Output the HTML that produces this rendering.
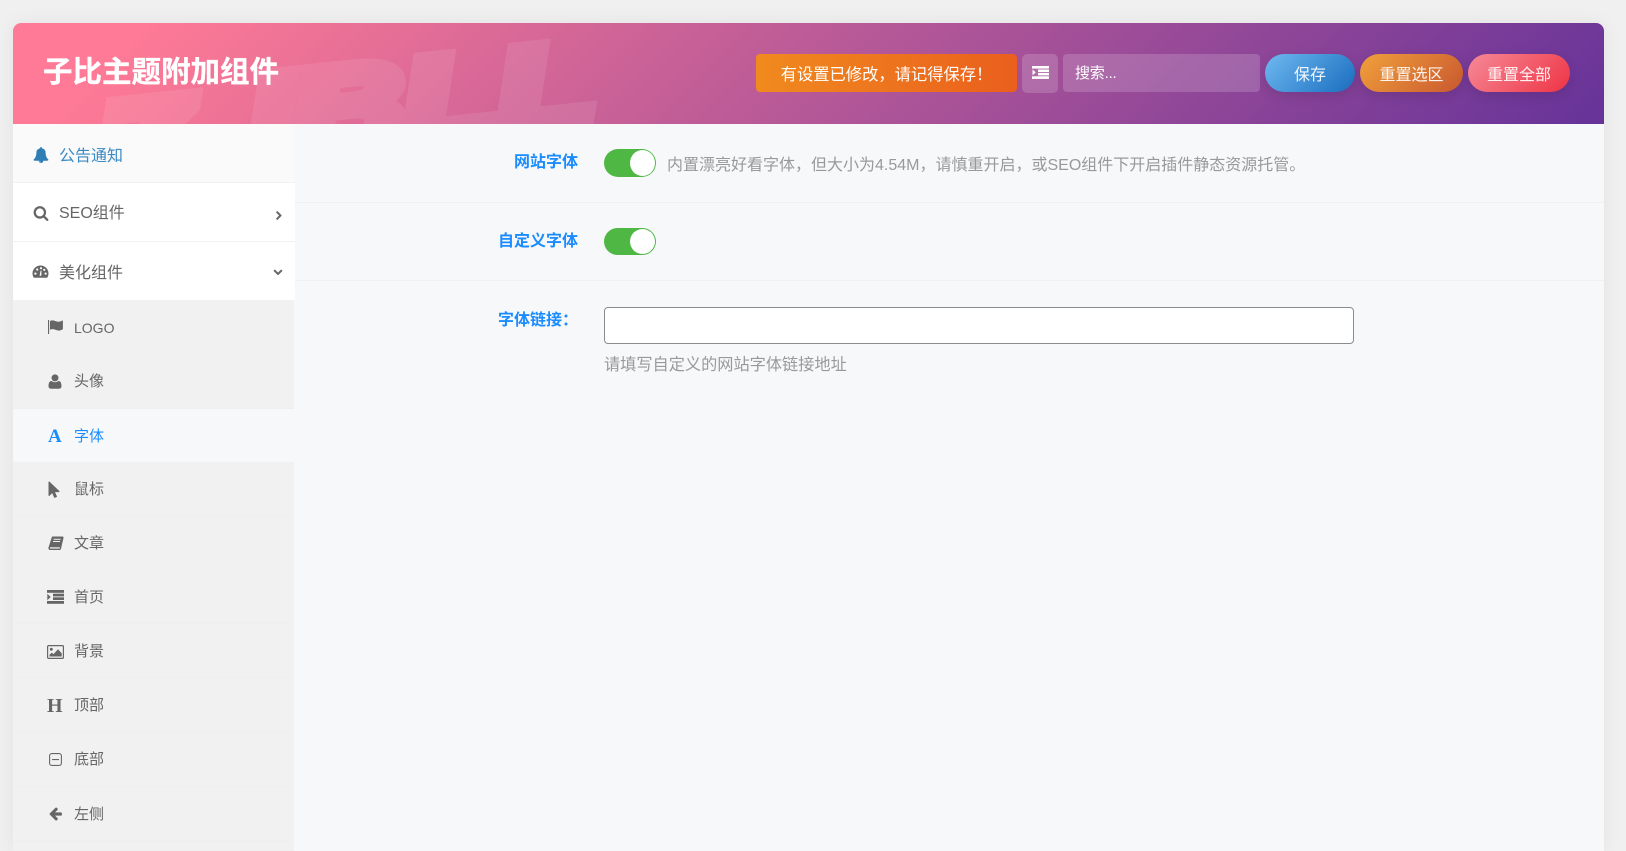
<!DOCTYPE html>
<html lang="zh-CN">
<head>
<meta charset="utf-8">
<title>子比主题附加组件</title>
<style>
html,body{margin:0;padding:0;width:1626px;height:851px;overflow:hidden;background:#f0f0f0;font-family:"Liberation Sans","Noto Sans CJK SC",sans-serif;}
*{box-sizing:border-box;}
.a{position:absolute;white-space:nowrap;}
#card{position:absolute;left:13px;top:23px;width:1591px;height:828px;border-radius:8px 8px 0 0;box-shadow:0 0 20px rgba(0,0,0,.06);background:#f7f8fa;}
#head{position:absolute;left:13px;top:23px;width:1591px;height:101px;border-radius:8px 8px 0 0;overflow:hidden;background:linear-gradient(135deg,#fe7a96 8%,#663399 100%);}
#wm{position:absolute;left:87px;top:36px;font:italic bold 115px/150px "Liberation Sans",sans-serif;color:#fff;opacity:.09;-webkit-text-stroke:15px #fff;transform:rotate(-6deg) scaleX(1.35);transform-origin:0 115px;white-space:nowrap;}
#wm b{letter-spacing:44px;font-weight:bold;position:relative;top:12px;}
#title{left:30px;top:5px;font-size:29.5px;line-height:90px;font-weight:700;color:#fff;-webkit-text-stroke:.3px #fff;}
.btn{position:absolute;top:54px;height:38px;line-height:44px;text-align:center;color:rgba(255,255,255,.92);font-size:16px;border-radius:19px;box-shadow:0 4px 12px rgba(0,0,0,.12);}
.side{position:absolute;left:13px;width:282px;background:#fff;}
.m{border-bottom:1px solid #f2f2f2;height:59px;color:#666;font-size:16px;}
.m span{position:absolute;left:46px;top:18px;line-height:26px;}
.s{background:#f1f1f1;border-bottom:1px solid #efefef;height:54px;width:281px;color:#666;font-size:15px;}
.s span{position:absolute;left:61px;top:15px;line-height:26px;}
svg{position:absolute;fill:currentColor;}
.lab{position:absolute;right:1048px;font-size:16px;font-weight:700;color:#1a8cff;line-height:26px;white-space:nowrap;}
.tog{position:absolute;left:604px;width:52px;height:28px;border-radius:14px;background:#4fb845;}
.tog i{position:absolute;right:1px;top:1px;width:25px;height:26px;border-radius:50%;background:#fff;}
.hr{position:absolute;left:295px;width:1309px;height:1px;background:#eef0f2;}
.help{position:absolute;font-size:16px;color:#999;line-height:26px;white-space:nowrap;}
</style>
</head>
<body>
<div id="card"></div>

<!-- sidebar -->
<div class="a" style="left:294px;top:124px;width:1px;height:727px;background:#f8f8f8;"></div>
<div class="side m" style="top:124px;background:#fafafa;color:#3a8ac4;"><span style="top:20px;">公告通知</span>
<svg style="left:20px;top:23px;color:#2f7db5" width="16" height="16" viewBox="0 0 1792 1792"><path d="M912 1696q0-16-16-16-59 0-101.5-42.5t-42.5-101.5q0-16-16-16t-16 16q0 73 51.5 124.5t124.5 51.5q16 0 16-16zm816-288q0 52-38 90t-90 38h-448q0 106-75 181t-181 75-181-75-75-181h-448q-52 0-90-38t-38-90q50-42 91-88t85-119.5 74.5-158.5 50-206 19.5-260q0-152 117-282.5t307-158.5q-8-19-8-39 0-40 28-68t68-28 68 28 28 68q0 20-8 39 190 28 307 158.5t117 282.5q0 139 19.5 260t50 206 74.5 158.5 85 119.5 91 88z"/></svg></div>
<div class="side m" style="top:183px;"><span>SEO组件</span>
<svg style="left:20px;top:22px" width="16" height="16" viewBox="0 0 1792 1792"><path d="M1216 832q0-185-131.5-316.5t-316.5-131.5-316.5 131.5-131.5 316.5 131.5 316.5 316.5 131.5 316.5-131.5 131.5-316.5zm512 832q0 52-38 90t-90 38q-54 0-90-38l-343-342q-179 124-399 124-143 0-273.5-55.5t-225-150-150-225-55.5-273.5 55.5-273.5 150-225 225-150 273.5-55.5 273.5 55.5 225 150 150 225 55.5 273.5q0 220-124 399l343 343q37 37 37 90z"/></svg>
<svg style="left:259px;top:25px" width="14" height="14" viewBox="0 0 1792 1792"><path d="M1171 960q0 13-10 23l-466 466q-10 10-23 10t-23-10l-50-50q-10-10-10-23t10-23l393-393-393-393q-10-10-10-23t10-23l50-50q10-10 23-10t23 10l466 466q10 10 10 23z" stroke="currentColor" stroke-width="120"/></svg></div>
<div class="side" style="top:242px;height:58px;color:#666;font-size:16px;"><span style="position:absolute;left:46px;top:19px;line-height:26px;">美化组件</span>
<svg style="left:19px;top:21px" width="17" height="17" viewBox="0 0 17 17"><path d="M8.500 2.500C4.100 2.500.5 6 .5 10.400c0 1.500.4 2.800 1.100 4 .2.300.5.400.8.400h12.200c.3 0 .6-.1.800-.4.700-1.200 1.100-2.500 1.100-4 0-4.400-3.600-7.900-8-7.900z"/><g fill="#fff"><circle cx="3.400" cy="10.600" r="1.100"/><circle cx="5.200" cy="6.500" r="1.100"/><circle cx="9" cy="5.200" r="1.100"/><circle cx="13.600" cy="10.600" r="1.100"/><circle cx="12.200" cy="6.800" r="1.100"/><path d="M7.600 12.800l1-5.200h.9l-.2 5.200z"/></g></svg>
<svg style="left:258px;top:23px" width="14" height="14" viewBox="0 0 1792 1792"><path d="M1395 736q0 13-10 23l-466 466q-10 10-23 10t-23-10l-466-466q-10-10-10-23t10-23l50-50q10-10 23-10t23 10l393 393 393-393q10-10 23-10t23 10l50 50q10 10 10 23z" stroke="currentColor" stroke-width="120"/></svg></div>

<div class="side s" style="top:300px;"><span style="font-size:14px;">LOGO</span>
<svg style="left:35px;top:19px" width="16" height="16" viewBox="0 0 16 16"><rect x="0" y="1" width="1.100" height="14" /><path d="M2 2.200C4 .8 6 1.500 8 2.300c2 .7 4 .6 6-.7.500-.2.900 0 .9.500v7.600c0 .4-.2.600-.5.800-2.200 1.400-4.400 1.300-6.600.4-2-.8-3.900-1.300-5.800 0z"/></svg></div>
<div class="side s" style="top:354px;height:55px;"><span>头像</span>
<svg style="left:35px;top:20px" width="14" height="15" viewBox="0 0 14 15"><circle cx="7" cy="3.900" r="3.500"/><path d="M3.600 7c1 .8 2.100 1.200 3.400 1.200s2.400-.4 3.400-1.200c2.200 0 3.100 2 3.100 5.300 0 1.500-1 2.400-2.200 2.400H2.700c-1.200 0-2.200-.9-2.200-2.400C.5 9 1.400 7 3.600 7z"/></svg></div>
<div class="side" style="top:409px;height:53px;background:#f7f8fa;width:282px;color:#1a8cff;font-size:15px;"><span style="position:absolute;left:61px;top:15px;line-height:26px;">字体</span><span style="position:absolute;left:35px;top:15px;line-height:26px;font:700 19px/26px 'Liberation Serif',serif;">A</span></div>
<div class="side s" style="top:462px;"><span>鼠标</span>
<svg style="left:35px;top:19px" width="12" height="17" viewBox="0 0 12 17"><path d="M.5 1.200c0-.6.700-.9 1.100-.5l9.700 9.300c.5.400.2 1.100-.4 1.100H7l1.900 4.100c.2.300 0 .7-.3.800l-1.700.8c-.3.100-.7 0-.8-.4l-1.900-4.300-2.600 2.700c-.4.400-1.100.1-1.100-.4z"/></svg></div>
<div class="side s" style="top:516px;"><span>文章</span>
<svg style="left:35px;top:20px" width="16" height="15" viewBox="0 0 16 15"><path d="M4 .5h10.600c.8 0 1.100.7.900 1.400L13 12.700c-.2.800-.7 1.300-1.500 1.300H2.300C1 14 .2 13 .5 11.500z"/><g fill="#f1f1f1"><rect x="5.600" y="2.800" width="7" height="1"/><rect x="5" y="5" width="7" height="1"/><rect x="2" y="11.300" width="9.800" height="1.300"/></g></svg></div>
<div class="side s" style="top:570px;"><span>首页</span>
<svg style="left:34px;top:20px" width="17" height="14" viewBox="0 0 17 14"><rect x="0" y="0" width="17" height="2.800"/><rect x="6" y="3.700" width="11" height="2.700"/><rect x="6" y="7.300" width="11" height="2.700"/><rect x="0" y="11" width="17" height="2.800"/><path d="M.3 3.800l3.400 3.200-3.400 3.200z"/></svg></div>
<div class="side s" style="top:624px;"><span>背景</span>
<svg style="left:34px;top:21px" width="17" height="14" viewBox="0 0 17 14"><rect x=".6" y=".6" width="15.800" height="12.800" rx="1" fill="none" stroke="currentColor" stroke-width="1.200"/><circle cx="4.300" cy="4.300" r="1.500"/><path d="M2.500 11.500V9.800l2.300-2.200 1.700 1.500 4.500-4.800 3.700 4v3.200z"/></svg></div>
<div class="side s" style="top:678px;"><span>顶部</span><span style="left:34px;top:15px;font:700 20px/26px 'Liberation Serif',serif;">H</span></div>
<div class="side s" style="top:732px;height:55px;"><span>底部</span>
<svg style="left:36px;top:21px" width="13" height="13" viewBox="0 0 13 13"><rect x=".6" y=".6" width="11.800" height="11.800" rx="2.200" fill="none" stroke="currentColor" stroke-width="1.100"/><rect x="3" y="6" width="7" height="1.100"/></svg></div>
<div class="side s" style="top:787px;"><span>左侧</span>
<svg style="left:35px;top:19px" width="15" height="15" viewBox="0 0 1792 1792"><path d="M1664 896v128q0 53-32.500 90.500t-84.500 37.500h-704l293 294q38 36 38 90t-38 90l-75 76q-37 37-90 37-52 0-91-37l-651-652q-37-37-37-90 0-52 37-91l651-650q38-38 91-38 52 0 90 38l75 74q38 38 38 91t-38 91l-293 293h704q52 0 84.500 37.500t32.500 90.500z"/></svg></div>
<div class="side s" style="top:841px;height:10px;"></div>

<!-- header -->
<div id="head">
  <div id="wm"><b>Z</b>IBLL</div>
  <div class="a" id="title">子比主题附加组件</div>
</div>
<div class="a" style="left:756px;top:54px;width:261px;height:38px;line-height:42px;text-align:center;font-size:16.3px;color:#fff;border-radius:4px;background:linear-gradient(90deg,#f08a1e,#ea5f1d);">有设置已修改，请记得保存！</div>
<div class="a" style="left:1022px;top:54px;width:36px;height:39px;border-radius:5px;background:rgba(255,255,255,.17);">
<svg style="left:10px;top:12px;color:#fff" width="17" height="13" viewBox="0 0 17 13"><rect x="0" y="0" width="17" height="2.600"/><rect x="6" y="3.500" width="11" height="2.500"/><rect x="6" y="6.900" width="11" height="2.500"/><rect x="0" y="10.300" width="17" height="2.600"/><path d="M.5 3.500L3.800 6.400.5 9.300z"/></svg></div>
<div class="a" style="left:1063px;top:54px;width:197px;height:38px;line-height:40px;border-radius:4px;background:rgba(255,255,255,.17);color:#fff;font-size:15px;padding-left:12px;letter-spacing:-.2px;">搜索...</div>
<div class="btn" style="left:1265px;width:90px;background:linear-gradient(135deg,#6fb9f0,#1a6dbf);">保存</div>
<div class="btn" style="left:1360px;width:103px;background:linear-gradient(135deg,#f0a03c,#c9582f);">重置选区</div>
<div class="btn" style="left:1468px;width:102px;background:linear-gradient(135deg,#f68a97,#ee3344);">重置全部</div>

<!-- content -->
<div class="lab" style="top:150px;">网站字体</div>
<div class="tog" style="top:149px;"><i></i></div>
<div class="help" style="left:667px;top:153px;">内置漂亮好看字体，但大小为4.54M，请慎重开启，或SEO组件下开启插件静态资源托管。</div>
<div class="hr" style="top:202px;"></div>
<div class="lab" style="top:229px;">自定义字体</div>
<div class="tog" style="top:228px;height:27px;"><i style="height:25px;"></i></div>
<div class="hr" style="top:280px;"></div>
<div class="lab" style="top:308px;">字体链接：</div>
<div class="a" style="left:604px;top:307px;width:750px;height:37px;background:#fff;border:1px solid #8c8c8c;border-radius:4px;"></div>
<div class="help" style="left:604px;top:352px;font-size:16.2px;">请填写自定义的网站字体链接地址</div>
</body>
</html>
